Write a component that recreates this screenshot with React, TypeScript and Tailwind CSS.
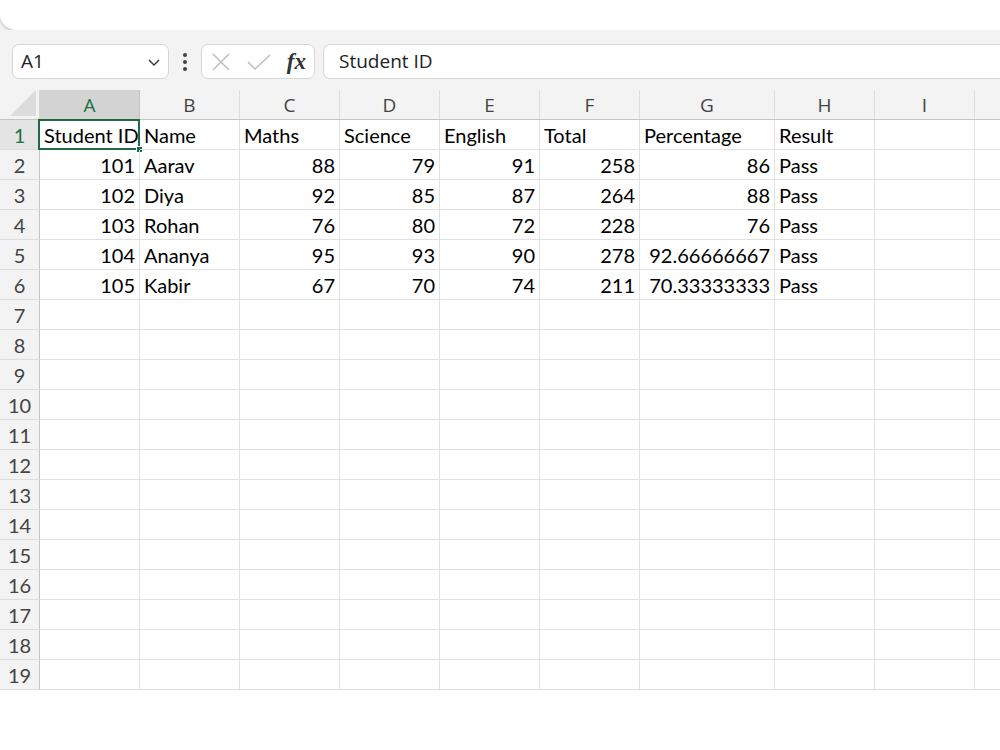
import React from 'react'

const cols = [
  { key: 'A', w: 'w-[100px]' },
  { key: 'B', w: 'w-[100px]' },
  { key: 'C', w: 'w-[100px]' },
  { key: 'D', w: 'w-[100px]' },
  { key: 'E', w: 'w-[100px]' },
  { key: 'F', w: 'w-[100px]' },
  { key: 'G', w: 'w-[135px]' },
  { key: 'H', w: 'w-[100px]' },
  { key: 'I', w: 'w-[100px]' },
  { key: '', w: 'w-[100px]' },
]

type Cell = { v: string; num?: boolean }

const data: Cell[][] = [
  [
    { v: 'Student ID' },
    { v: 'Name' },
    { v: 'Maths' },
    { v: 'Science' },
    { v: 'English' },
    { v: 'Total' },
    { v: 'Percentage' },
    { v: 'Result' },
  ],
  [101, 'Aarav', 88, 79, 91, 258, 86, 'Pass'],
  [102, 'Diya', 92, 85, 87, 264, 88, 'Pass'],
  [103, 'Rohan', 76, 80, 72, 228, 76, 'Pass'],
  [104, 'Ananya', 95, 93, 90, 278, '92.66666667', 'Pass'],
  [105, 'Kabir', 67, 70, 74, 211, '70.33333333', 'Pass'],
].map((row, i) =>
  i === 0
    ? (row as Cell[])
    : (row as (string | number)[]).map((v) =>
        typeof v === 'number' || /^\d/.test(String(v))
          ? { v: String(v), num: true }
          : { v: String(v) }
      )
)

const rows = Array.from({ length: 19 }, (_, i) => i + 1)

function FormulaBar() {
  return (
    <div className="flex items-center gap-2 bg-[#f3f3f3] pl-[12px] pt-[14px] pb-[11px] h-[60px]">
      <div className="flex items-center justify-between w-[157px] h-[35px] bg-white border border-[#d6d6d6] rounded-[7px] pl-[8px] pr-[6px]">
        <span className="text-[19px] text-[#222]" style={{ fontFamily: '"Open Sans", sans-serif' }}>A1</span>
        <svg width="16" height="16" viewBox="0 0 16 16" fill="none" stroke="#333" strokeWidth="1.4">
          <path d="M3 6l5 5 5-5" />
        </svg>
      </div>
      <div className="flex flex-col gap-[3px] px-[6px]">
        <span className="w-[4px] h-[4px] rounded-full bg-[#444]" />
        <span className="w-[4px] h-[4px] rounded-full bg-[#444]" />
        <span className="w-[4px] h-[4px] rounded-full bg-[#444]" />
      </div>
      <div className="flex items-center justify-between w-[114px] h-[35px] bg-white border border-[#d6d6d6] rounded-[7px] pl-[9px] pr-[8px]">
        <svg width="20" height="20" viewBox="0 0 20 20" fill="none" stroke="#bdbdbd" strokeWidth="1.5">
          <path d="M2 2l16 16M18 2L2 18" />
        </svg>
        <svg width="26" height="20" viewBox="0 0 26 20" fill="none" stroke="#bdbdbd" strokeWidth="1.5">
          <path d="M2 10l7 7L24 3" />
        </svg>
        <span
          className="text-[23px] italic font-bold text-[#333] leading-none"
          style={{ fontFamily: '"Liberation Serif", serif' }}
        >
          fx
        </span>
      </div>
      <div className="flex-1 flex items-center h-[35px] bg-white border border-r-0 border-[#d6d6d6] rounded-l-[7px] pl-[15px]">
        <span className="text-[19px] text-[#222]" style={{ fontFamily: '"Open Sans", sans-serif' }}>
          Student ID
        </span>
      </div>
    </div>
  )
}

function Grid() {
  return (
    <div className="flex flex-col" style={{ fontFamily: 'Lato, sans-serif' }}>
      <div className="flex h-[30px] bg-[#f3f3f3] border-b border-[#c4c4c4]">
        <div className="relative w-[40px] shrink-0 border-r border-[#d4d4d4]">
          <svg className="absolute right-[3px] bottom-[3px]" width="26" height="26" viewBox="0 0 26 26">
            <path d="M26 0V26H0Z" fill="#dcdcdc" />
          </svg>
        </div>
        {cols.map((c) => (
          <div
            key={c.key || 'j'}
            className={`${c.w} shrink-0 flex items-center justify-center pt-[2px] border-r text-[19px] ${
              c.key === 'A'
                ? 'bg-[#d3d3d3] text-[#1e7145] border-[#c4c4c4]'
                : 'text-[#444] border-[#dedede]'
            }`}
            style={{ fontFamily: '"Open Sans", sans-serif' }}
          >
            {c.key}
          </div>
        ))}
      </div>
      {rows.map((r) => (
        <div key={r} className="flex h-[30px]">
          <div
            className={`w-[40px] shrink-0 flex items-center justify-center border-r border-b border-r-[#c4c4c4] border-b-[#dedede] text-[20px] ${
              r === 1 ? 'bg-[#e4e4e4] text-[#1e7145]' : 'bg-[#f3f3f3] text-[#444]'
            }`}
          >
            {r}
          </div>
          {cols.map((c, ci) => {
            const cell = data[r - 1]?.[ci]
            const selected = r === 1 && ci === 0
            return (
              <div
                key={ci}
                className={`${c.w} shrink-0 relative flex items-center border-r border-b border-[#e1e1e1] text-[20px] text-black whitespace-nowrap ${
                  cell?.num ? 'justify-end pr-[4px]' : 'pl-[4px]'
                }`}
              >
                {cell?.v}
                {selected && (
                  <>
                    <div className="absolute -left-[2px] -top-[1px] -right-[1px] -bottom-[1px] border-2 border-[#1e6b41]" />
                    <div className="absolute -right-[4px] -bottom-[4px] w-[7px] h-[7px] bg-[#1e6b41] border border-white" />
                  </>
                )}
              </div>
            )
          })}
        </div>
      ))}
    </div>
  )
}

export default function App() {
  return (
    <div className="w-[1000px] h-[750px] overflow-hidden bg-white">
      <div className="bg-[#f3f3f3]">
        <div className="h-[30px] bg-white rounded-bl-[16px] shadow-[0_2px_3px_rgba(0,0,0,0.18)]" />
        <FormulaBar />
      </div>
      <Grid />
    </div>
  )
}
